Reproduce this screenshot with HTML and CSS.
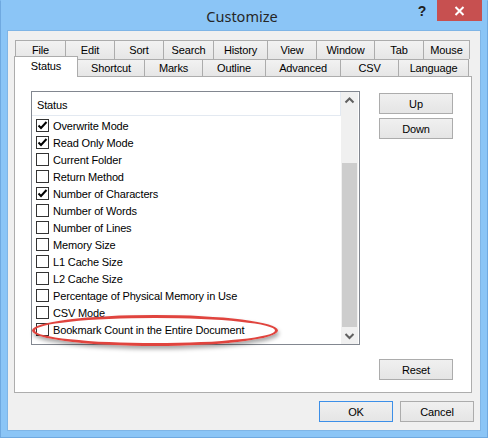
FILE: index.html
```html
<!DOCTYPE html>
<html>
<head>
<meta charset="utf-8">
<link rel="stylesheet" href="styles.css">
</head>
<body>
<div class="window">
  <div class="titlebar">
    <div></div>
    <div class="title">Customize</div>
    <div class="controls">
      <div class="help">?</div>
      <div class="close">
        <svg width="45" height="20" viewBox="0 0 45 20"><path d="M18.5 6 L26.5 14 M26.5 6 L18.5 14" stroke="#fff" stroke-width="2" fill="none"/></svg>
      </div>
    </div>
  </div>
  <div class="client">
    <div class="tabs">
      <div class="tabrow row1">
        <div class="tab" style="width:50px">File</div>
        <div class="tab" style="width:49px">Edit</div>
        <div class="tab" style="width:49px">Sort</div>
        <div class="tab" style="width:50px">Search</div>
        <div class="tab" style="width:54px">History</div>
        <div class="tab" style="width:49px">View</div>
        <div class="tab" style="width:58px">Window</div>
        <div class="tab" style="width:49px">Tab</div>
        <div class="tab last" style="width:47px">Mouse</div>
      </div>
      <div class="tabrow row2">
        <div class="tab selected" style="width:64px">Status</div>
        <div class="tab" style="width:67px">Shortcut</div>
        <div class="tab" style="width:58px">Marks</div>
        <div class="tab" style="width:63px">Outline</div>
        <div class="tab" style="width:75px">Advanced</div>
        <div class="tab" style="width:58px">CSV</div>
        <div class="tab last" style="width:71px">Language</div>
      </div>
    </div>
    <div class="panel">
      <div class="listbox">
        <div class="listcontent">
          <div class="header">Status</div>
          <div class="item"><span class="cb"><svg width="11" height="11" viewBox="0 0 11 11"><path d="M1.5 5.5 L4 8 L9.5 2" stroke="#000" stroke-width="2" fill="none"/></svg></span>Overwrite Mode</div>
          <div class="item"><span class="cb"><svg width="11" height="11" viewBox="0 0 11 11"><path d="M1.5 5.5 L4 8 L9.5 2" stroke="#000" stroke-width="2" fill="none"/></svg></span>Read Only Mode</div>
          <div class="item"><span class="cb"></span>Current Folder</div>
          <div class="item"><span class="cb"></span>Return Method</div>
          <div class="item"><span class="cb"><svg width="11" height="11" viewBox="0 0 11 11"><path d="M1.5 5.5 L4 8 L9.5 2" stroke="#000" stroke-width="2" fill="none"/></svg></span>Number of Characters</div>
          <div class="item"><span class="cb"></span>Number of Words</div>
          <div class="item"><span class="cb"></span>Number of Lines</div>
          <div class="item"><span class="cb"></span>Memory Size</div>
          <div class="item"><span class="cb"></span>L1 Cache Size</div>
          <div class="item"><span class="cb"></span>L2 Cache Size</div>
          <div class="item"><span class="cb"></span>Percentage of Physical Memory in Use</div>
          <div class="item"><span class="cb"></span>CSV Mode</div>
          <div class="item"><span class="cb"></span>Bookmark Count in the Entire Document</div>
        </div>
        <div class="scrollbar">
          <div class="arrow"><svg width="17" height="17" viewBox="0 0 17 17"><path d="M4.5 10.5 L8.5 6.5 L12.5 10.5" stroke="#606060" stroke-width="2" fill="none"/></svg></div>
          <div class="track"><div class="thumb"></div></div>
          <div class="arrow"><svg width="17" height="17" viewBox="0 0 17 17"><path d="M4.5 7 L8.5 11 L12.5 7" stroke="#606060" stroke-width="2" fill="none"/></svg></div>
        </div>
      </div>
      <div class="sidebtns">
        <div class="btn">Up</div>
        <div class="btn">Down</div>
        <div class="btn reset">Reset</div>
      </div>
      <div class="ellipse"></div>
    </div>
    <div class="footer">
      <div class="btn default">OK</div>
      <div class="btn">Cancel</div>
    </div>
  </div>
</div>
</body>
</html>
```
FILE: styles.css
```css
* { box-sizing: border-box; }
html, body { margin: 0; padding: 0; }
body {
  width: 488px;
  height: 438px;
  overflow: hidden;
  font-family: "Liberation Sans", Arial, sans-serif;
  font-size: 11px;
  letter-spacing: -0.15px;
  color: #000;
}
.window {
  width: 488px;
  height: 438px;
  background: #8bc5f6;
  border: 1px solid #6fa9e0;
  border-top-color: #8bc5f6;
  display: flex;
  flex-direction: column;
}
.titlebar {
  height: 29px;
  display: grid;
  grid-template-columns: 1fr auto 1fr;
  padding-right: 5px;
}
.title {
  font-family: "Noto Sans", "Open Sans", sans-serif;
  font-size: 14.5px;
  letter-spacing: 0;
  color: #262626;
  line-height: 30px;
  padding-left: 1px;
}
.controls {
  display: flex;
  justify-content: flex-end;
  align-items: flex-start;
  margin-top: -1px;
}
.help {
  width: 26px;
  height: 21px;
  font-family: "Liberation Sans", Arial, sans-serif;
  font-weight: bold;
  font-size: 14px;
  color: #202020;
  text-align: center;
  line-height: 23px;
  padding-right: 4px;
}
.close {
  width: 45px;
  height: 21px;
  background: #c75050;
  display: flex;
  align-items: center;
}
.client {
  margin: 0 6px;
  height: 401px;
  background: #f0f0f0;
  border: 1px solid #7fb5e6;
  display: flex;
  flex-direction: column;
}
.tabs {
  margin-top: 9px;
  margin-left: 6px;
}
.tabrow {
  display: flex;
}
.row1 {
  height: 19px;
  margin-left: 1px;
}
.row2 {
  height: 17px;
  align-items: flex-end;
  position: relative;
  z-index: 1;
}
.tab {
  height: 100%;
  border: 1px solid #acacac;
  border-right: none;
  border-bottom: none;
  background: linear-gradient(#f2f2f2, #e6e6e6);
  text-align: center;
  line-height: 17px;
  white-space: nowrap;
}
.row1 .tab { line-height: 19px; }
.tab.last { border-right: 1px solid #acacac; }
.tab.selected {
  height: 21px;
  margin-bottom: -1px;
  margin-right: -1px;
  background: #fff;
  border-right: 1px solid #acacac;
  line-height: 18px;
  position: relative;
  z-index: 2;
}
.panel {
  position: relative;
  margin-left: 6px;
  width: 458px;
  height: 317px;
  background: #fff;
  border: 1px solid #adadad;
  display: flex;
  padding: 14px 0 12px 16px;
}
.listbox {
  width: 329px;
  height: 254px;
  border: 1px solid #828790;
  display: flex;
}
.listcontent {
  flex: 1;
}
.header {
  height: 24px;
  border-bottom: 1px solid #e3e9f1;
  border-right: 1px solid #e3e9f1;
  padding-left: 5px;
  padding-top: 2px;
  line-height: 23px;
  margin-bottom: 1px;
}
.item {
  height: 17px;
  display: flex;
  align-items: center;
  padding-left: 4px;
  padding-top: 1px;
  white-space: nowrap;
}
.cb {
  width: 13px;
  height: 13px;
  border: 1px solid #333;
  background: #fff;
  margin-right: 4px;
  flex: none;
  display: flex;
  margin-top: -1px;
}
.scrollbar {
  width: 17px;
  background: #f0f0f0;
  display: flex;
  flex-direction: column;
  margin-right: 1px;
}
.arrow {
  height: 17px;
  flex: none;
}
.track {
  flex: 1;
  display: flex;
  flex-direction: column;
  justify-content: flex-end;
}
.thumb {
  height: 164px;
  background: #cdcdcd;
  margin: 0 1px;
}
.sidebtns {
  margin-left: 19px;
  padding-top: 2px;
  display: flex;
  flex-direction: column;
  gap: 4px;
}
.btn {
  width: 74px;
  height: 21px;
  border: 1px solid #acacac;
  background: linear-gradient(#f0f0f0, #e5e5e5);
  text-align: center;
  line-height: 20px;
}
.btn.reset { margin-top: auto; }
.btn.default { border-color: #3c8fe8; }
.ellipse {
  position: absolute;
  left: 17px;
  top: 238px;
  width: 246px;
  height: 31px;
  border: 3px solid #e0443e;
  border-radius: 50%;
  box-shadow: 1px 3px 4px rgba(0,0,0,0.35);
}
.footer {
  display: flex;
  justify-content: flex-end;
  gap: 7px;
  margin-top: 8px;
  padding-right: 6px;
}
```
